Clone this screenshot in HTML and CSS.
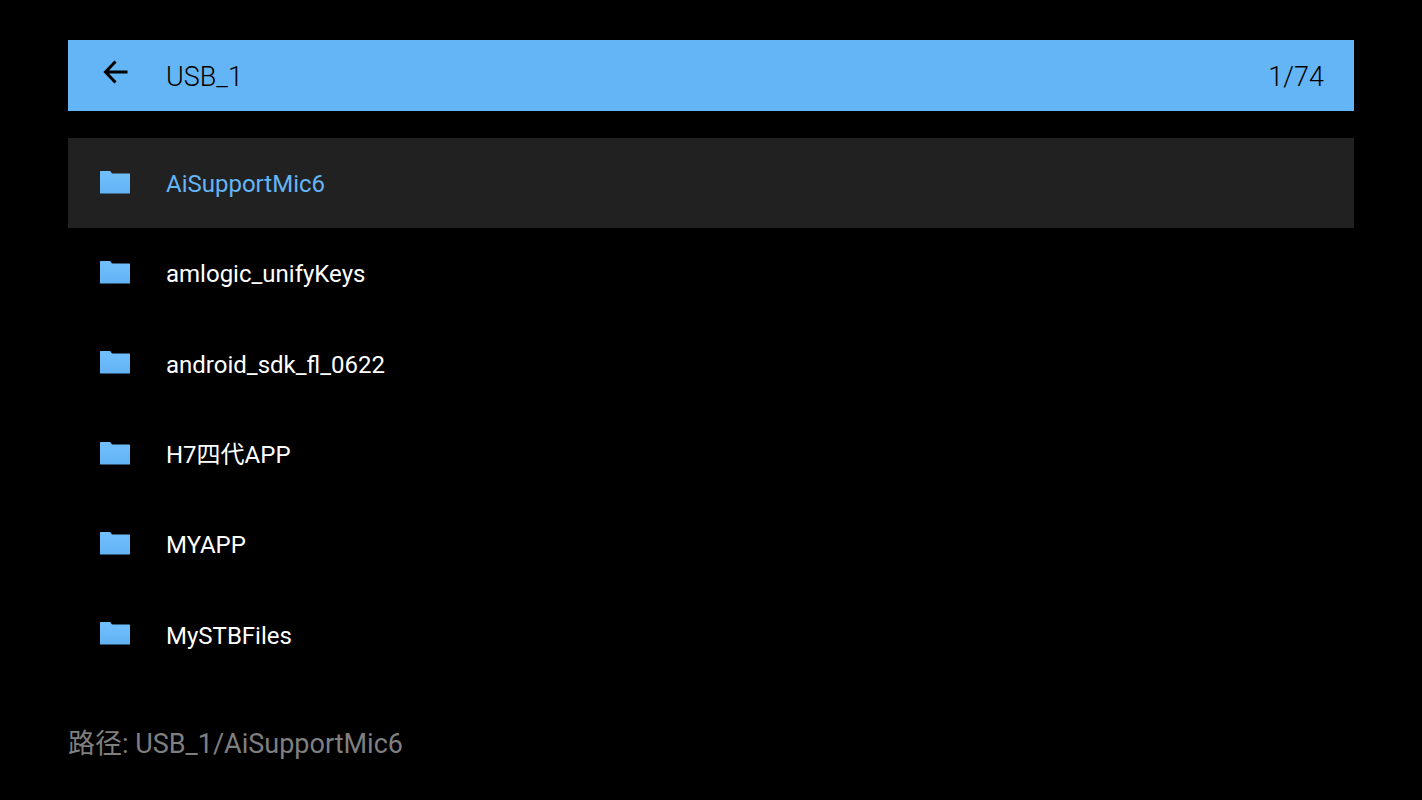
FILE: index.html
```
<!DOCTYPE html>
<html lang="zh-CN">
  <head>
    <meta charset="utf-8">
    <meta name="viewport" content="width=device-width, initial-scale=1">
    <title>USB_1</title>
    <link rel="stylesheet" href="styles.css">
  </head>
  <body>
    <!-- shared folder icon -->
    <svg class="sprite" aria-hidden="true">
      <defs>
        <linearGradient id="folderFill" x1="0" y1="0" x2="0" y2="1">
          <stop offset="0" stop-color="#72bffc" />
          <stop offset="1" stop-color="#62b3f5" />
        </linearGradient>
        <symbol id="folder" viewBox="0 0 30 23">
          <path fill="url(#folderFill)" d="M.8 0H9c1.300 0 1.700.5 2.200 1.400.4.7.8 1 1.500 1H29.300c.5 0 .7.2.7.7V22c0 .4-.2.600-.6.600H.6c-.4 0-.6-.2-.6-.6V.8C0 .3.3 0 .8 0z" />
        </symbol>
      </defs>
    </svg>

    <header class="topBar">
      <button class="backBtn" type="button" aria-label="返回">
        <svg class="backIcon" viewBox="0 0 26 26" aria-hidden="true">
          <path d="M25.500 12H4M13.500 1.500L3.500 12l10 10.500" />
        </svg>
      </button>
      <h1 class="title">USB_1</h1>
      <span class="counter">1/74</span>
    </header>

    <main class="fileList">
      <a class="fileRow selected" href="#"><svg class="folderIcon" aria-hidden="true"><use href="#folder" /></svg><span>AiSupportMic6</span></a>
      <a class="fileRow" href="#"><svg class="folderIcon" aria-hidden="true"><use href="#folder" /></svg><span>amlogic_unifyKeys</span></a>
      <a class="fileRow" href="#"><svg class="folderIcon" aria-hidden="true"><use href="#folder" /></svg><span>android_sdk_fl_0622</span></a>
      <a class="fileRow" href="#"><svg class="folderIcon" aria-hidden="true"><use href="#folder" /></svg><span>H7四代APP</span></a>
      <a class="fileRow" href="#"><svg class="folderIcon" aria-hidden="true"><use href="#folder" /></svg><span>MYAPP</span></a>
      <a class="fileRow" href="#"><svg class="folderIcon" aria-hidden="true"><use href="#folder" /></svg><span>MySTBFiles</span></a>
    </main>

    <footer class="path">路径: USB_1/AiSupportMic6</footer>
  </body>
</html>
```
FILE: styles.css
```
/* General Styles */
* {
  box-sizing: border-box;
}

body {
  display: flex;
  flex-direction: column;
  min-height: 100vh;
  margin: 0;
  padding: 40px 68px;
  background-color: #000000;
  color: #ffffff;
  font-family: Roboto, "Noto Sans CJK SC", sans-serif;
  font-size: 24px;
  line-height: 32px;
}

.sprite {
  position: absolute;
  width: 0;
  height: 0;
}

/* Top Bar Styles */
.topBar {
  display: flex;
  align-items: flex-start;
  padding: 20px 30px 16px 32px;
  background-color: #64b5f6;
  color: #000000;
  font-size: 27px;
  font-weight: 300;
  line-height: 35px;
}

.backBtn {
  display: flex;
  width: 30px;
  height: 33px;
  margin-right: 36px;
  padding: 0 2px;
  border: none;
  background: none;
  cursor: pointer;
}

.backIcon {
  width: 26px;
  height: 26px;
  fill: none;
  stroke: #000000;
  stroke-width: 3;
}

.title {
  flex: 1;
  margin: 0;
  font-size: 27px;
  font-weight: 300;
}

/* File List Styles */
.fileList {
  display: flex;
  flex: 1;
  flex-direction: column;
  margin-top: 27px;
}

.fileRow {
  display: flex;
  flex: 1;
  align-items: center;
  gap: 36px;
  padding: 2px 32px 0;
  color: #ffffff;
  text-decoration: none;
}

.fileRow.selected {
  background-color: #212121;
  color: #64b5f6;
}

.folderIcon {
  width: 30px;
  height: 23px;
  margin-bottom: 4px;
}

/* Current Path Styles */
.path {
  margin-top: 48px;
  color: #7f7f7f;
  font-size: 27px;
}
```
